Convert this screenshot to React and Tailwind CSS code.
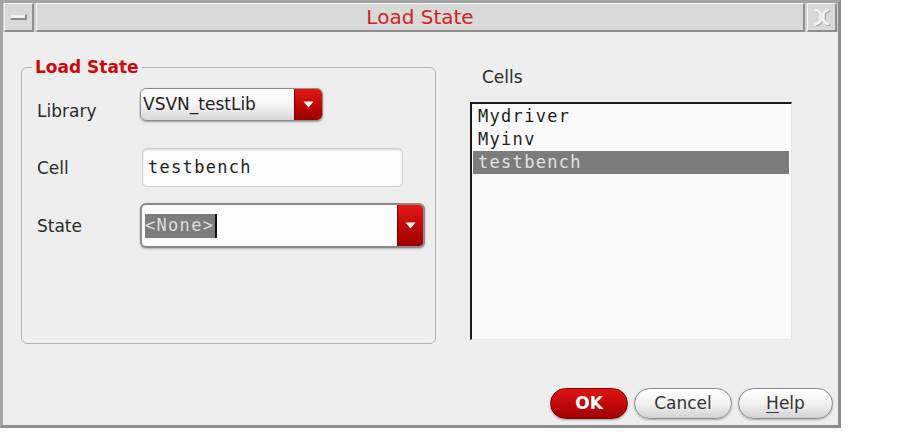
import React from "react";

const sans = { fontFamily: '"DejaVu Sans", Verdana, sans-serif' };
const mono = { fontFamily: '"DejaVu Sans Mono", "Liberation Mono", monospace' };

function Tri() {
  return (
    <svg width="11" height="7" viewBox="0 0 11 7">
      <path d="M0.5 0.5 L10.5 0.5 L5.5 6.5 Z" fill="#ffffff" />
    </svg>
  );
}

function RedDrop({ w }) {
  return (
    <div
      className="flex items-center justify-center self-stretch bg-gradient-to-b from-[#e41616] to-[#9c0000] border-l border-[#7a0000]"
      style={{ width: w }}
    >
      <Tri />
    </div>
  );
}

export default function App() {
  return (
    <div className="w-[911px] h-[432px] bg-white" style={sans}>
      <div className="w-[841px] h-[428px] border-[3px] border-[#a4a4a4] border-b-[#8c8c8c] border-r-[#8c8c8c] bg-[#eeeeee] flex flex-col">
        {/* Title bar */}
        <div className="h-[29px] flex gap-[2px] px-[1px] bg-[#cfcfcf]">
          <div className="w-[30px] bg-[#d9d9d9] border-t border-l border-t-[#f4f4f4] border-l-[#f4f4f4] border-r-2 border-b-2 border-r-[#8f8f8f] border-b-[#8f8f8f] flex items-center justify-center">
            <div className="w-[17px] h-[6px] bg-[#f2f2f2] border-t border-l border-t-[#dcdcdc] border-l-[#dcdcdc] border-b-2 border-r-2 border-b-[#8a8a8a] border-r-[#8a8a8a] rounded-[1px]" />
          </div>
          <div className="flex-1 bg-[#d9d9d9] border-t border-l border-t-[#f4f4f4] border-l-[#f4f4f4] border-r-2 border-b-2 border-r-[#8f8f8f] border-b-[#8f8f8f] flex items-center justify-center">
            <span className="text-[20px] leading-[24px] text-[#d42222]">Load State</span>
          </div>
          <div className="w-[30px] bg-[#d9d9d9] border-t border-l border-t-[#f4f4f4] border-l-[#f4f4f4] border-r-2 border-b-2 border-r-[#8f8f8f] border-b-[#8f8f8f] flex items-center justify-center">
            <svg width="18" height="18" viewBox="0 0 18 18">
              <g fill="none" strokeLinecap="round" strokeLinejoin="round" strokeWidth="2.6">
                <g stroke="#a0a0a0" transform="translate(1 1)">
                  <path d="M3 2 Q9 4 7.5 9 Q9 14 3 16" />
                  <path d="M15 2 Q9 4 10.5 9 Q9 14 15 16" />
                </g>
                <g stroke="#f4f4f4">
                  <path d="M3 2 Q9 4 7.5 9 Q9 14 3 16" />
                  <path d="M15 2 Q9 4 10.5 9 Q9 14 15 16" />
                </g>
              </g>
            </svg>
          </div>
        </div>

        {/* Body */}
        <div className="flex-1 flex flex-col">
          <div className="flex pt-[25px] pl-[18px]">
            <fieldset className="w-[415px] h-[287px] border border-[#b4b4b4] rounded-[6px]">
              <legend className="ml-[10px] px-[3px] text-[17px] leading-[20px] font-bold text-[#cc0a0a]">
                Load State
              </legend>
              <div className="flex flex-col pl-[15px] pt-[11px]">
                {/* Library */}
                <div className="flex items-start h-[33px]">
                  <div className="w-[103px] pt-[13px] text-[17px] leading-[20px] text-[#2a2a2a]">Library</div>
                  <div className="w-[183px] h-[33px] flex rounded-[6px] border border-[#8c8c8c] shadow-[0_1px_2px_rgba(0,0,0,0.35)] overflow-hidden bg-gradient-to-b from-white via-[#f6f6f6] to-[#d6d6d6]">
                    <div className="flex-1 flex items-center pl-[2px] text-[17px] text-[#222]">VSVN_testLib</div>
                    <RedDrop w={28} />
                  </div>
                </div>
                {/* Cell */}
                <div className="flex items-center h-[39px] mt-[27px]">
                  <div className="w-[103px] text-[17px] leading-[20px] text-[#2a2a2a]">Cell</div>
                  <div
                    className="ml-[2px] w-[261px] h-[39px] flex items-center pl-[5px] bg-[#fcfcfc] border border-[#d0d0d0] rounded-[5px] shadow-[inset_0_1px_2px_rgba(0,0,0,0.15)] text-[17px] tracking-[1.3px] text-[#1e1e1e]"
                    style={mono}
                  >
                    testbench
                  </div>
                </div>
                {/* State */}
                <div className="flex items-center h-[45px] mt-[16px]">
                  <div className="w-[103px] text-[17px] leading-[20px] text-[#2a2a2a]">State</div>
                  <div className="w-[285px] h-[45px] flex rounded-[6px] border-2 border-[#8a8a8a] overflow-hidden bg-[#fcfcfc] shadow-[0_1px_2px_rgba(0,0,0,0.25)]">
                    <div className="flex-1 flex items-center pl-[3px]">
                      <span
                        className="h-[24px] flex items-center bg-[#7c7c7c] text-[#dedede] text-[17px] tracking-[1.3px] pr-[1px]"
                        style={mono}
                      >
                        &lt;None&gt;
                      </span>
                      <span className="w-[2px] h-[24px] bg-[#111]" />
                    </div>
                    <RedDrop w={26} />
                  </div>
                </div>
              </div>
            </fieldset>

            {/* Cells */}
            <div className="ml-[34px] flex flex-col pt-[10px]">
              <div className="ml-[12px] text-[17px] leading-[20px] text-[#2a2a2a]">Cells</div>
              <div
                className="mt-[15px] w-[322px] h-[238px] bg-[#fbfbfb] border-t-2 border-l-2 border-t-[#1c1c1c] border-l-[#1c1c1c] border-r border-b border-r-[#e6e6e6] border-b-[#e6e6e6] pt-[1px] text-[17px] tracking-[1.3px]"
                style={mono}
              >
                <div className="h-[23px] flex items-center ml-[1px] mr-[2px] pl-[5px] text-[#1e1e1e]">Mydriver</div>
                <div className="h-[23px] flex items-center ml-[1px] mr-[2px] pl-[5px] text-[#1e1e1e]">Myinv</div>
                <div className="h-[23px] flex items-center ml-[1px] mr-[2px] pl-[5px] bg-[#7c7c7c] text-[#e2e2e2]">testbench</div>
              </div>
            </div>
          </div>

          <div className="flex-1" />

          {/* Buttons */}
          <div className="flex justify-end gap-[6px] pr-[5px] pb-[6px]">
            <button className="w-[78px] h-[31px] rounded-full bg-gradient-to-b from-[#e21414] to-[#a00000] border border-[#7c0000] shadow-[0_1px_2px_rgba(0,0,0,0.35)] text-white font-bold text-[17px] flex items-center justify-center">
              OK
            </button>
            <button className="w-[98px] h-[31px] rounded-full bg-gradient-to-b from-white via-[#f2f2f2] to-[#d2d2d2] border border-[#8e8e8e] shadow-[0_1px_2px_rgba(0,0,0,0.3)] text-[#333] text-[17px] flex items-center justify-center">
              Cancel
            </button>
            <button className="w-[95px] h-[31px] rounded-full bg-gradient-to-b from-white via-[#f2f2f2] to-[#d2d2d2] border border-[#8e8e8e] shadow-[0_1px_2px_rgba(0,0,0,0.3)] text-[#333] text-[17px] flex items-center justify-center">
              <span className="underline underline-offset-[3px]">H</span>elp
            </button>
          </div>
        </div>
      </div>
    </div>
  );
}
